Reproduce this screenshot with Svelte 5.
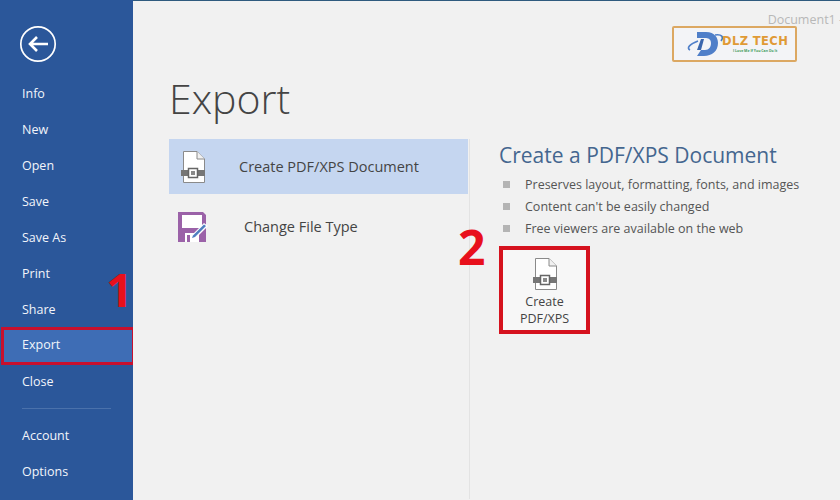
<script>
	const topItems = ['Info', 'New', 'Open', 'Save', 'Save As', 'Print', 'Share', 'Export', 'Close'];
	const bottomItems = ['Account', 'Options'];
	const bullets = [
		'Preserves layout, formatting, fonts, and images',
		"Content can't be easily changed",
		'Free viewers are available on the web'
	];
</script>

{#snippet pdfIcon()}
	<svg class="pdf-icon" width="26" height="32" viewBox="0 0 26 32">
		<path d="M3.5 .5H17L24.5 8V31.5H3.5Z" fill="#fff" stroke="#8a8a8a" />
		<path d="M17 .5V8H24.5" fill="#f1f1f1" stroke="#8a8a8a" />
		<rect x="1" y="19" width="24" height="6" fill="#767676" />
		<rect x="8.5" y="17.5" width="9" height="9" fill="#fff" stroke="#666" stroke-width="1.5" />
		<rect x="11" y="20" width="4" height="4" fill="#8a8a8a" />
	</svg>
{/snippet}

<div class="window">
	<nav class="sidebar">
		<div class="back">
			<svg width="38" height="38" viewBox="0 0 38 38">
				<circle cx="19" cy="19" r="17.2" fill="none" stroke="#fff" stroke-width="1.7" />
				<path d="M29 19H11M18 12L11 19L18 26" fill="none" stroke="#fff" stroke-width="2.6" />
			</svg>
		</div>
		<ul class="menu">
			{#each topItems as item}
				<li class:active={item === 'Export'}>{item}</li>
			{/each}
		</ul>
		<div class="divider"></div>
		<ul class="menu">
			{#each bottomItems as item}
				<li>{item}</li>
			{/each}
		</ul>
		<span class="step step-one">1</span>
	</nav>

	<main class="content">
		<div class="doc-title">Document1 -</div>
		<div class="logo">
			<svg width="40" height="30" viewBox="0 0 40 30">
				<path d="M12 3H21C30 3 33 9 33 14C33 22 27 27 19 27H12L16 21H20C24 21 26 18 26 14C26 10 23 9 20 9H12Z" fill="#4f7fc9" />
				<path d="M16 10L12 21H16L19 10Z" fill="#3a66ad" />
				<path d="M13 12C5 15 1 19 5 21M30 6C37 5 39 8 36 12" fill="none" stroke="#4f7fc9" stroke-width="1.6" />
			</svg>
			<div class="logo-text">
				<span class="logo-name">DLZ TECH</span>
				<span class="logo-tag">I Love Me If You Can Do It</span>
			</div>
		</div>

		<h1>Export</h1>

		<div class="columns">
			<div class="options">
				<div class="option selected">
					{@render pdfIcon()}
					<span>Create PDF/XPS Document</span>
				</div>
				<div class="option">
					<svg class="type-icon" width="32" height="32" viewBox="0 0 32 32">
						<path d="M1 1H26L29 4V31H1Z" fill="#9b62a8" />
						<rect x="5" y="4" width="20" height="13" fill="#fff" />
						<rect x="8" y="22" width="14" height="9" fill="#fff" />
						<rect x="10" y="24" width="3" height="7" fill="#9b62a8" />
						<path d="M13 29L15 24L27 12L31 15L19 27Z" fill="#fff" />
						<path d="M15 27L16 24.5L27 13.5L29 15L18 26Z" fill="#4f7fc0" />
					</svg>
					<span>Change File Type</span>
				</div>
			</div>

			<section class="detail">
				<h2>Create a PDF/XPS Document</h2>
				<ul class="bullets">
					{#each bullets as bullet}
						<li>{bullet}</li>
					{/each}
				</ul>
				<button class="create">
					{@render pdfIcon()}
					<span>Create<br />PDF/XPS</span>
				</button>
				<span class="step step-two">2</span>
			</section>
		</div>
	</main>
</div>

<style>
	:global(body) {
		margin: 0;
		background: #f1f1f1;
	}

	.window {
		display: flex;
		width: 840px;
		height: 500px;
		overflow: hidden;
		font-family: 'Open Sans', 'Noto Sans', sans-serif;
	}

	.sidebar {
		position: relative;
		flex: 0 0 133px;
		box-sizing: border-box;
		padding-top: 25px;
		background: #2b579a;
		color: #f2f5fa;
	}

	.back {
		height: 51px;
		padding-left: 19px;
	}

	.menu {
		margin: 0;
		padding: 0;
		list-style: none;
	}

	.menu li {
		box-sizing: border-box;
		height: 36px;
		padding-left: 22px;
		font-size: 12.5px;
		line-height: 36px;
	}

	.menu li.active {
		margin-left: 1px;
		margin-right: -2px;
		padding-left: 21px;
		background: #3e6db5;
		line-height: 30px;
		border: 3px solid #c8102e;
		border-left-width: 3px;
		padding-left: 18px;
		height: 38px;
		margin-top: -1px;
		margin-bottom: -1px;
		position: relative;
	}

	.divider {
		height: 1px;
		margin: 8px 22px 9px;
		background: #4a71ab;
	}

	.step {
		position: absolute;
		color: #e8101c;
		font-family: 'Open Sans', sans-serif;
		font-weight: 700;
		line-height: 1;
	}

	.step-one {
		left: 106px;
		top: 266px;
		font-size: 47px;
	}

	.content {
		position: relative;
		flex: 1;
		box-sizing: border-box;
		padding: 0 0 0 36px;
		border-top: 1px solid #2f5a7e;
		background: #f1f1f1;
		color: #444;
	}

	.doc-title {
		position: absolute;
		top: 10px;
		right: -3px;
		color: #b8b8b8;
		font-size: 12.5px;
	}

	.logo {
		position: absolute;
		top: 25px;
		left: 539px;
		display: flex;
		align-items: center;
		box-sizing: border-box;
		width: 125px;
		height: 36px;
		padding-left: 11px;
		border: 2px solid #dca862;
		border-radius: 2px;
		background: #f3f4f7;
	}

	.logo-text {
		display: flex;
		flex-direction: column;
		align-items: center;
		margin-left: -3px;
	}

	.logo-name {
		color: #e09a36;
		font-family: 'DejaVu Sans', sans-serif;
		font-size: 11.5px;
		font-weight: 700;
		letter-spacing: 0.4px;
		line-height: 13px;
	}

	.logo-tag {
		color: #3f9a5a;
		font-size: 3.5px;
		font-weight: 700;
		line-height: 5px;
	}

	h1 {
		margin: 0;
		padding-top: 69px;
		color: #444;
		font-size: 41px;
		font-weight: 300;
		line-height: 56px;
	}

	.columns {
		display: flex;
		margin-top: 13px;
		height: 360px;
	}

	.options {
		flex: 0 0 299px;
		padding-right: 1px;
		border-right: 1px solid #e3e3e3;
		margin-right: 29px;
		margin-left: 0;
	}

	.option {
		display: flex;
		align-items: center;
		gap: 33px;
		height: 55px;
		padding-left: 11px;
		margin-bottom: 5px;
		font-size: 14.5px;
	}

	.option.selected {
		background: #c5d6f0;
	}

	.type-icon {
		margin-left: -3px;
		margin-right: 2px;
	}

	.detail {
		position: relative;
	}

	h2 {
		margin: 0;
		color: #44668f;
		font-size: 21px;
		font-weight: 400;
		line-height: 32px;
	}

	.bullets {
		margin: 0;
		padding: 3px 0 0 4px;
		list-style: none;
	}

	.bullets li {
		position: relative;
		height: 22px;
		padding-left: 22px;
		color: #555;
		font-size: 12.5px;
		line-height: 22px;
	}

	.bullets li::before {
		content: '';
		position: absolute;
		left: 0;
		top: 7px;
		width: 7px;
		height: 7px;
		background: #b4b4b4;
	}

	.create {
		display: flex;
		flex-direction: column;
		align-items: center;
		box-sizing: border-box;
		width: 91px;
		height: 88px;
		margin-top: 6px;
		padding: 8px 0 0;
		border: 4px solid #d5121e;
		background: #f7f7f7;
		color: #444;
		font-family: inherit;
		font-size: 12.5px;
		line-height: 17px;
	}

	.create span {
		margin-top: 3px;
	}

	.step-two {
		left: -41px;
		top: 84px;
		font-size: 48px;
	}
</style>
